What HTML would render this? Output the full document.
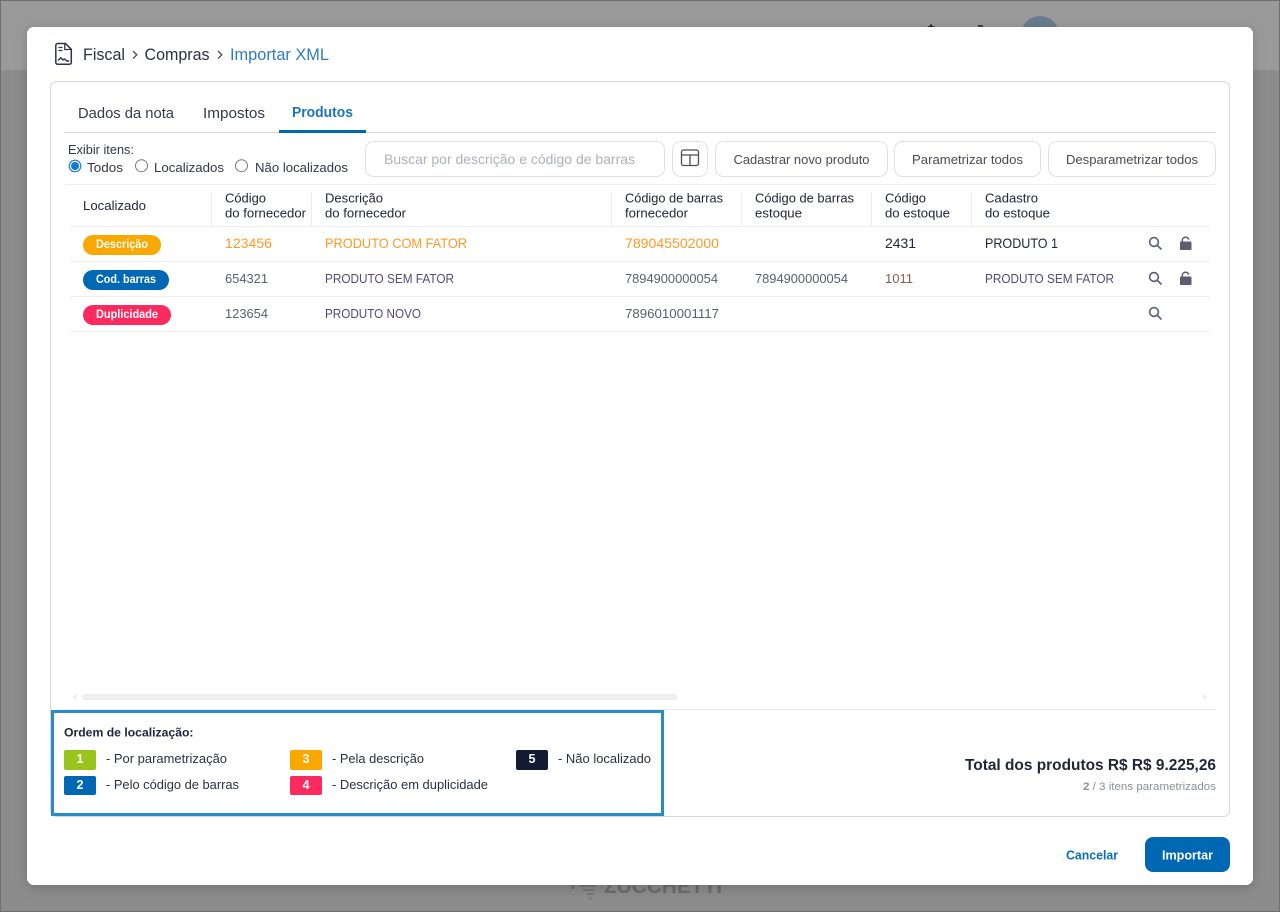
<!DOCTYPE html>
<html lang="pt-BR">
<head>
<meta charset="utf-8">
<title>Importar XML</title>
<style>
html,body{margin:0;padding:0;width:1280px;height:912px;overflow:hidden;background:#8b8c8b}
svg{display:block}
text{font-family:"Liberation Sans",sans-serif;white-space:pre}
.h{font-size:13px;fill:#22263a}
.r{font-size:13px;fill:#5a5e70}
.d{font-size:13px;fill:#504b78}
.o{font-size:14px;fill:#fd9a27}
.k{font-size:14px;fill:#22263a}
.b{font-size:12px;font-weight:bold;fill:#fff}
.btn{font-size:13px;fill:#4a4c55}
.l{font-size:13px;fill:#2c3044}
.n{font-size:13px;font-weight:bold;fill:#fff}
</style>
</head>
<body>
<svg width="1280" height="912" viewBox="0 0 1280 912" xmlns="http://www.w3.org/2000/svg">
<defs>
<filter id="s" x="-5%" y="-5%" width="110%" height="110%"><feDropShadow dx="0" dy="3" stdDeviation="6" flood-color="#000" flood-opacity=".18"/></filter>
</defs>
<!-- backdrop -->
<rect width="1280" height="912" fill="#8b8c8b"/>
<rect width="1280" height="70" fill="#9a9a9a"/>
<rect x=".5" y=".5" width="1279" height="911" fill="none" stroke="#6f6f6f"/>
<circle cx="1040" cy="35" r="19" fill="#677d8c"/>
<path d="M927 27l2-1h1v-1.500h2v1.500h1l2 1z" fill="#1c2030"/>
<rect x="978" y="25" width="5" height="2" fill="#3a3e50"/>
<text x="604" y="893" font-size="21" font-weight="bold" fill="#6c6d6c" textLength="118" lengthAdjust="spacingAndGlyphs">ZUCCHETTI</text>
<path d="M571 885h4l-1 4h-3zM578 885h18l-1 2h-15zM582 889h13l-1 2h-11zM586 893h8l-1 2h-6zM589 897h3l-1 3h-1z" fill="#767776"/>

<!-- modal -->
<rect x="27" y="27" width="1226" height="858" rx="7" fill="#fff" filter="url(#s)"/>

<!-- breadcrumb -->
<path d="M57.800 43.500h7.700l5.800 5.800v13a2 2 0 0 1-2 2H57.800a2 2 0 0 1-2-2V45.500a2 2 0 0 1 2-2z" fill="none" stroke="#2f3347" stroke-width="1.500"/>
<path d="M64.800 44v5.500h6.200M58.500 47.500h4M58.500 50.500h4" fill="none" stroke="#2f3347" stroke-width="1.300"/>
<path d="M58 60.500l2.800-2.700 2 2.200 1.600-1 2.600 2h2.200" fill="none" stroke="#2f3347" stroke-width="1.400"/>
<text x="83" y="60" font-size="16.500" fill="#2c3044" textLength="42" lengthAdjust="spacingAndGlyphs">Fiscal</text>
<path d="M133 51l3.800 3.800-3.800 3.800" fill="none" stroke="#444858" stroke-width="1.300"/>
<text x="144.500" y="60" font-size="16.500" fill="#2c3044" textLength="65" lengthAdjust="spacingAndGlyphs">Compras</text>
<path d="M218 51l3.800 3.800-3.800 3.800" fill="none" stroke="#444858" stroke-width="1.300"/>
<text x="230" y="60" font-size="16.500" fill="#2f7cc4" textLength="99" lengthAdjust="spacingAndGlyphs">Importar XML</text>

<!-- panel -->
<rect x="50.500" y="81.500" width="1179" height="735" rx="6" fill="#fff" stroke="#d4d7de"/>

<!-- tabs -->
<text x="78" y="118" font-size="15" fill="#353949" textLength="96" lengthAdjust="spacingAndGlyphs">Dados da nota</text>
<text x="203" y="118" font-size="15" fill="#353949" textLength="62" lengthAdjust="spacingAndGlyphs">Impostos</text>
<text x="292" y="117" font-size="15" font-weight="bold" fill="#1a74bd" textLength="61" lengthAdjust="spacingAndGlyphs">Produtos</text>
<rect x="64" y="132" width="1152" height="1" fill="#d0d5e0"/>
<rect x="279" y="130" width="87" height="3" fill="#0068b3"/>

<!-- filters -->
<text x="68" y="154" font-size="13" fill="#33374a" textLength="66" lengthAdjust="spacingAndGlyphs">Exibir itens:</text>
<circle cx="75" cy="166" r="5.800" fill="#fff" stroke="#1c80d8" stroke-width="1.200"/>
<circle cx="75" cy="166" r="4" fill="#0f78dc"/>
<text x="87" y="172" font-size="13" fill="#33374a" textLength="36" lengthAdjust="spacingAndGlyphs">Todos</text>
<circle cx="141.500" cy="165.700" r="6" fill="#fff" stroke="#76777c" stroke-width="1"/>
<text x="154" y="172" font-size="13" fill="#33374a" textLength="70" lengthAdjust="spacingAndGlyphs">Localizados</text>
<circle cx="241.500" cy="165.700" r="6" fill="#fff" stroke="#76777c" stroke-width="1"/>
<text x="255" y="172" font-size="13" fill="#33374a" textLength="93" lengthAdjust="spacingAndGlyphs">Não localizados</text>

<!-- toolbar -->
<rect x="365.500" y="141.500" width="299" height="35" rx="8" fill="#fff" stroke="#dfe1e6"/>
<text x="384" y="164" font-size="14" fill="#aeb1bf" textLength="251" lengthAdjust="spacingAndGlyphs">Buscar por descrição e código de barras</text>
<rect x="672.500" y="141.500" width="35" height="35" rx="8" fill="#fff" stroke="#dfe1e6"/>
<rect x="681.500" y="150" width="17" height="15.500" rx="2" fill="none" stroke="#4c4e58" stroke-width="1.300"/>
<path d="M681.500 155h17M690 155v10.500" fill="none" stroke="#4c4e58" stroke-width="1.300"/>
<rect x="715.500" y="141.500" width="172" height="35" rx="8" fill="#fff" stroke="#dfe1e6"/>
<text class="btn" x="733.500" y="164" textLength="136" lengthAdjust="spacingAndGlyphs">Cadastrar novo produto</text>
<rect x="894.500" y="141.500" width="146" height="35" rx="8" fill="#fff" stroke="#dfe1e6"/>
<text class="btn" x="912" y="164" textLength="111" lengthAdjust="spacingAndGlyphs">Parametrizar todos</text>
<rect x="1048.500" y="141.500" width="167" height="35" rx="8" fill="#fff" stroke="#dfe1e6"/>
<text class="btn" x="1066" y="164" textLength="132" lengthAdjust="spacingAndGlyphs">Desparametrizar todos</text>

<!-- table header -->
<rect x="65" y="184" width="1151" height="1" fill="#eeeff1"/>
<path d="M211.500 192v34M311.500 192v34M611.500 192v34M741.500 192v34M871.500 192v34M971.500 192v34" stroke="#eceded"/>
<text class="h" x="83" y="210" textLength="63" lengthAdjust="spacingAndGlyphs">Localizado</text>
<text class="h" x="225" y="202.500" textLength="41" lengthAdjust="spacingAndGlyphs">Código</text>
<text class="h" x="225" y="217.500" textLength="81" lengthAdjust="spacingAndGlyphs">do fornecedor</text>
<text class="h" x="325" y="202.500" textLength="58" lengthAdjust="spacingAndGlyphs">Descrição</text>
<text class="h" x="325" y="217.500" textLength="81" lengthAdjust="spacingAndGlyphs">do fornecedor</text>
<text class="h" x="625" y="202.500" textLength="98" lengthAdjust="spacingAndGlyphs">Código de barras</text>
<text class="h" x="625" y="217.500" textLength="63" lengthAdjust="spacingAndGlyphs">fornecedor</text>
<text class="h" x="755" y="202.500" textLength="99" lengthAdjust="spacingAndGlyphs">Código de barras</text>
<text class="h" x="755" y="217.500" textLength="47" lengthAdjust="spacingAndGlyphs">estoque</text>
<text class="h" x="885" y="202.500" textLength="41" lengthAdjust="spacingAndGlyphs">Código</text>
<text class="h" x="885" y="217.500" textLength="65" lengthAdjust="spacingAndGlyphs">do estoque</text>
<text class="h" x="985" y="202.500" textLength="53" lengthAdjust="spacingAndGlyphs">Cadastro</text>
<text class="h" x="985" y="217.500" textLength="65" lengthAdjust="spacingAndGlyphs">do estoque</text>
<path d="M70 226.500h1140M70 261.500h1140M70 296.500h1140M70 331.500h1140" stroke="#eceded"/>

<!-- row 1 -->
<rect x="83" y="235" width="78" height="20" rx="10" fill="#f9a800"/>
<text class="b" x="96" y="248" textLength="52" lengthAdjust="spacingAndGlyphs">Descrição</text>
<text class="o" x="225" y="248" textLength="47" lengthAdjust="spacingAndGlyphs">123456</text>
<text class="o" x="325" y="248" textLength="142" lengthAdjust="spacingAndGlyphs">PRODUTO COM FATOR</text>
<text class="o" x="625" y="248" textLength="94" lengthAdjust="spacingAndGlyphs">789045502000</text>
<text class="k" x="885" y="248" textLength="31" lengthAdjust="spacingAndGlyphs">2431</text>
<text class="k" x="985" y="248" textLength="73" lengthAdjust="spacingAndGlyphs">PRODUTO 1</text>

<!-- row 2 -->
<rect x="83" y="270" width="86" height="20" rx="10" fill="#0068b3"/>
<text class="b" x="96" y="283" textLength="60" lengthAdjust="spacingAndGlyphs">Cod. barras</text>
<text class="r" x="225" y="283" textLength="43" lengthAdjust="spacingAndGlyphs">654321</text>
<text class="d" x="325" y="283" textLength="129" lengthAdjust="spacingAndGlyphs">PRODUTO SEM FATOR</text>
<text class="r" x="625" y="283" textLength="93" lengthAdjust="spacingAndGlyphs">7894900000054</text>
<text class="r" x="755" y="283" textLength="93" lengthAdjust="spacingAndGlyphs">7894900000054</text>
<text x="885" y="283" font-size="13" fill="#8a5a4a" textLength="28" lengthAdjust="spacingAndGlyphs">1011</text>
<text class="d" x="985" y="283" textLength="129" lengthAdjust="spacingAndGlyphs">PRODUTO SEM FATOR</text>

<!-- row 3 -->
<rect x="83" y="305" width="88" height="20" rx="10" fill="#fb2b5f"/>
<text class="b" x="96" y="318" textLength="62" lengthAdjust="spacingAndGlyphs">Duplicidade</text>
<text class="r" x="225" y="318" textLength="43" lengthAdjust="spacingAndGlyphs">123654</text>
<text class="d" x="325" y="318" textLength="96" lengthAdjust="spacingAndGlyphs">PRODUTO NOVO</text>
<text class="r" x="625" y="318" textLength="94" lengthAdjust="spacingAndGlyphs">7896010001117</text>

<!-- search icons -->
<g fill="none" stroke="#5a5e78" stroke-width="1.600" stroke-linecap="round">
<circle cx="1154" cy="242" r="4.400"/><path d="M1157.300 245.300l3.700 3.700"/>
<circle cx="1154" cy="277" r="4.400"/><path d="M1157.300 280.300l3.700 3.700"/>
<circle cx="1154" cy="312" r="4.400"/><path d="M1157.300 315.300l3.700 3.700"/>
</g>
<!-- lock icons -->
<g>
<rect x="1180" y="241.500" width="11.500" height="8.500" rx="1.300" fill="#5f5b72"/>
<path d="M1182.300 242v-1.500a3.300 3.300 0 0 1 6.500-.8" fill="none" stroke="#5f5b72" stroke-width="1.500"/>
</g>
<g>
<rect x="1180" y="276.500" width="11.500" height="8.500" rx="1.300" fill="#5f5b72"/>
<path d="M1182.300 277v-1.500a3.300 3.300 0 0 1 6.500-.8" fill="none" stroke="#5f5b72" stroke-width="1.500"/>
</g>

<!-- scrollbar -->
<rect x="82" y="694" width="595" height="6" rx="3" fill="#eeeeee"/>
<path d="M76.500 694v6l-4-3zM1203 694v6l4-3z" fill="#eeeeee"/>
<rect x="65" y="709" width="1151" height="1" fill="#e8e9eb"/>

<!-- legend -->
<rect x="52.500" y="711.500" width="610" height="103" fill="#fff" stroke="#2a8bcb" stroke-width="3"/>
<text x="64" y="736.500" font-size="12" font-weight="bold" fill="#22263a" textLength="129.500" lengthAdjust="spacingAndGlyphs">Ordem de localização:</text>
<rect x="64" y="750" width="32" height="20" rx="2" fill="#9ac31c"/>
<text class="n" x="76.500" y="763" textLength="7" lengthAdjust="spacingAndGlyphs">1</text>
<text class="l" x="106" y="763" textLength="121" lengthAdjust="spacingAndGlyphs">- Por parametrização</text>
<rect x="64" y="776" width="32" height="19" rx="2" fill="#0068b3"/>
<text class="n" x="76.500" y="789" textLength="7" lengthAdjust="spacingAndGlyphs">2</text>
<text class="l" x="106" y="789" textLength="133" lengthAdjust="spacingAndGlyphs">- Pelo código de barras</text>
<rect x="290" y="750" width="32" height="20" rx="2" fill="#f9a800"/>
<text class="n" x="302.500" y="763" textLength="7" lengthAdjust="spacingAndGlyphs">3</text>
<text class="l" x="332" y="763" textLength="92" lengthAdjust="spacingAndGlyphs">- Pela descrição</text>
<rect x="290" y="776" width="32" height="19" rx="2" fill="#fb2b5f"/>
<text class="n" x="302.500" y="789" textLength="7" lengthAdjust="spacingAndGlyphs">4</text>
<text class="l" x="332" y="789" textLength="156" lengthAdjust="spacingAndGlyphs">- Descrição em duplicidade</text>
<rect x="516" y="750" width="32" height="20" rx="2" fill="#151b33"/>
<text class="n" x="528.500" y="763" textLength="7" lengthAdjust="spacingAndGlyphs">5</text>
<text class="l" x="558" y="763" textLength="93" lengthAdjust="spacingAndGlyphs">- Não localizado</text>

<!-- totals -->
<text x="965" y="770" font-size="16" font-weight="bold" fill="#22263a" textLength="251" lengthAdjust="spacingAndGlyphs">Total dos produtos R$ R$ 9.225,26</text>
<text x="1083" y="790" font-size="11" fill="#8b8e9a" textLength="133" lengthAdjust="spacingAndGlyphs"><tspan font-weight="bold">2</tspan> / 3 itens parametrizados</text>

<!-- footer -->
<text x="1066" y="859.500" font-size="13" font-weight="bold" fill="#0b70b9" textLength="52" lengthAdjust="spacingAndGlyphs">Cancelar</text>
<rect x="1145" y="837" width="85" height="35" rx="8" fill="#0068b3"/>
<text x="1162" y="859.500" font-size="13" font-weight="bold" fill="#fff" textLength="51" lengthAdjust="spacingAndGlyphs">Importar</text>
</svg>
</body>
</html>
